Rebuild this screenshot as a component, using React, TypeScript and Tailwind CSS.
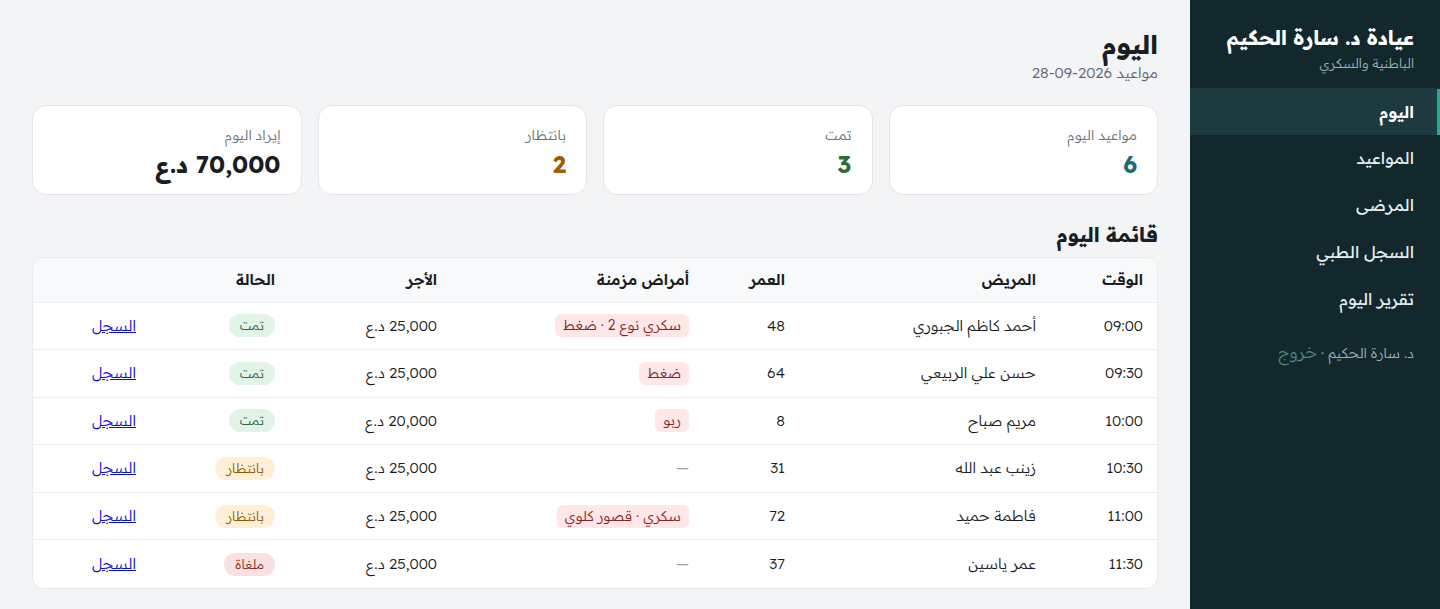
import React from "react";

const stats = [
  { label: "مواعيد اليوم", value: "6", color: "text-[#1c6b70]" },
  { label: "تمت", value: "3", color: "text-[#2b6b3c]" },
  { label: "بانتظار", value: "2", color: "text-[#a35a00]" },
  { label: "إيراد اليوم", value: "70,000 د.ع", color: "text-[#1a1d21]" },
];

type Row = {
  time: string;
  name: string;
  age: string;
  chronic: string | null;
  fee: string;
  status: "done" | "wait" | "cancel";
};

const rows: Row[] = [
  { time: "09:00", name: "أحمد كاظم الجبوري", age: "48", chronic: "سكري نوع 2 · ضغط", fee: "25,000 د.ع", status: "done" },
  { time: "09:30", name: "حسن علي الربيعي", age: "64", chronic: "ضغط", fee: "25,000 د.ع", status: "done" },
  { time: "10:00", name: "مريم صباح", age: "8", chronic: "ربو", fee: "20,000 د.ع", status: "done" },
  { time: "10:30", name: "زينب عبد الله", age: "31", chronic: null, fee: "25,000 د.ع", status: "wait" },
  { time: "11:00", name: "فاطمة حميد", age: "72", chronic: "سكري · قصور كلوي", fee: "25,000 د.ع", status: "wait" },
  { time: "11:30", name: "عمر ياسين", age: "37", chronic: null, fee: "25,000 د.ع", status: "cancel" },
];

function StatusBadge({ s }: { s: Row["status"] }) {
  if (s === "done")
    return <span className="inline-block rounded-full bg-[#e2f3e7] text-[#2c6a3c] px-[11px] h-[23px] leading-[23px] text-[13px]">تمت</span>;
  if (s === "wait")
    return <span className="inline-block rounded-full bg-[#fdf0d6] text-[#8a5706] px-[11px] h-[23px] leading-[23px] text-[13px]">بانتظار</span>;
  return <span className="inline-block rounded-full bg-[#f7e1e1] text-[#8a2727] px-[11px] h-[23px] leading-[23px] text-[13px]">ملغاة</span>;
}

const navItems = ["اليوم", "المواعيد", "المرضى", "السجل الطبي", "تقرير اليوم"];

export default function App() {
  return (
    <div
      dir="rtl"
      className="flex min-h-[609px] w-full bg-[#f3f4f6] text-[#1a1d21] font-[350]"
      style={{ fontFamily: '"Readex Pro", "Noto Sans", sans-serif' }}
    >
      {/* Sidebar */}
      <aside className="w-[250px] shrink-0 bg-[#13282d] text-white flex flex-col">
        <div className="h-[89px] px-[26px] pt-[22px] border-b border-[#1d363b]">
          <div className="text-[20px] font-bold leading-[32px] whitespace-nowrap">عيادة د. سارة الحكيم</div>
          <div className="text-[13px] leading-[18px] text-[#9fb3b6]">الباطنية والسكري</div>
        </div>
        <nav className="flex flex-col">
          {navItems.map((n, i) => (
            <div
              key={n}
              className={
                i === 0
                  ? "h-[46px] flex items-center pr-[23px] bg-[#1c3a3f] border-r-[3px] border-[#2aa596] text-[16.5px] font-semibold text-white"
                  : "h-[47px] flex items-center pr-[26px] text-[16.5px] font-normal text-[#e6eeee]"
              }
            >
              {n}
            </div>
          ))}
        </nav>
        <div className="pr-[26px] mt-[17px] text-[14px] text-[#9fb3b6]">
          د. سارة الحكيم · <span className="text-[#4f8b87] text-[16px]">خروج</span>
        </div>
      </aside>

      {/* Main */}
      <main className="flex-1 px-[32px] pt-[28px] pb-[20px]">
        <h1 className="text-[26px] font-bold leading-[34px]">اليوم</h1>
        <div className="text-[15px] text-[#5f6670] leading-[22px]">مواعيد 2026-09-28</div>

        <div className="grid grid-cols-4 gap-[16px] mt-[21px]">
          {stats.map((s) => (
            <div key={s.label} className="h-[90px] bg-white rounded-[14px] border border-[#e4e6ea] px-[20px] pt-[17px]">
              <div className="text-[14px] text-[#6b7078] leading-[24px]">{s.label}</div>
              <div className={`text-[24px] font-bold leading-[34px] ${s.color}`}>{s.value}</div>
            </div>
          ))}
        </div>

        <h2 className="text-[20px] font-bold mt-[24px] leading-[32px]">قائمة اليوم</h2>

        <div className="mt-[6px] bg-white rounded-[12px] border border-[#e8eaed] overflow-hidden">
          <table className="w-full table-fixed text-[15px] border-collapse">
            <thead>
              <tr className="bg-[#f8f9fa] h-[44px] border-b border-[#eceef0]">
                <th className="w-[107px] text-right font-semibold pr-[14px]">الوقت</th>
                <th className="w-[251px] text-right font-semibold pr-[14px]">المريض</th>
                <th className="w-[96px] text-right font-semibold pr-[14px]">العمر</th>
                <th className="w-[252px] text-right font-semibold pr-[14px]">أمراض مزمنة</th>
                <th className="w-[162px] text-right font-semibold pr-[14px]">الأجر</th>
                <th className="w-[139px] text-right font-semibold pr-[14px]">الحالة</th>
                <th className="text-right font-semibold pr-[14px]"></th>
              </tr>
            </thead>
            <tbody>
              {rows.map((r, i) => (
                <tr key={r.time} className={`h-[47.6px] ${i < rows.length - 1 ? "border-b border-[#eceef0]" : ""}`}>
                  <td className="pr-[14px]">{r.time}</td>
                  <td className="pr-[14px]">{r.name}</td>
                  <td className="pr-[14px]">{r.age}</td>
                  <td className="pr-[14px]">
                    {r.chronic ? (
                      <span className="inline-block rounded-[6px] bg-[#fde7e7] text-[#8b2020] px-[8px] h-[23px] leading-[23px] text-[14px]">
                        {r.chronic}
                      </span>
                    ) : (
                      <span className="text-[#9aa0a6]">—</span>
                    )}
                  </td>
                  <td className="pr-[14px]">{r.fee}</td>
                  <td className="pr-[14px]">
                    <StatusBadge s={r.status} />
                  </td>
                  <td className="pr-[14px]">
                    <a href="#" className="text-[#0b0bd6] underline">السجل</a>
                  </td>
                </tr>
              ))}
            </tbody>
          </table>
        </div>
      </main>
    </div>
  );
}
